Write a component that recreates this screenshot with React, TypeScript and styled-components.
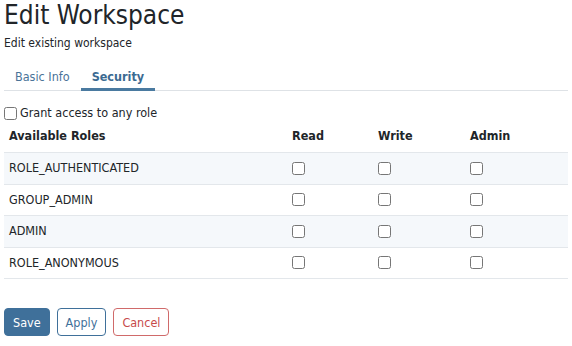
import React, { useState } from 'react';
import styled, { createGlobalStyle } from 'styled-components';

const GlobalStyle = createGlobalStyle`
  body {
    margin: 0;
    background: #ffffff;
    font-family: "DejaVu Sans Condensed", "DejaVu Sans", sans-serif;
    color: #212529;
  }
`;

const Page = styled.div`
  width: 572px;
  padding: 0 4px;
  box-sizing: border-box;
`;

const Title = styled.h1`
  margin: 0;
  font-size: 26px;
  font-weight: 400;
  line-height: 30px;
`;

const Subtitle = styled.p`
  margin: 5px 0 0;
  font-size: 12px;
  line-height: 16px;
`;

const TabBar = styled.div`
  display: flex;
  margin-top: 15px;
  border-bottom: 1px solid #dee2e6;
`;

const Tab = styled.button<{ $active?: boolean }>`
  border: 0;
  background: none;
  font-family: inherit;
  font-size: 12.5px;
  font-weight: ${(p) => (p.$active ? 700 : 400)};
  color: ${(p) => (p.$active ? '#3b6a91' : '#4a7398')};
  padding: 3px 11px 3px;
  line-height: 16px;
  margin-bottom: -1px;
  border-bottom: 3px solid ${(p) => (p.$active ? '#4a7aa0' : 'transparent')};
  cursor: pointer;
`;

const GrantRow = styled.label`
  display: flex;
  align-items: center;
  gap: 3px;
  margin-top: 14px;
  font-size: 12.5px;
  line-height: 16px;
`;

const Check = styled.input`
  width: 13px;
  height: 13px;
  margin: 0;
  display: block;
`;

const Table = styled.table`
  width: 100%;
  table-layout: fixed;
  border-collapse: collapse;
  font-size: 12.5px;
`;

const Col = styled.col<{ $w?: number }>`
  width: ${(p) => (p.$w ? `${p.$w}px` : 'auto')};
`;

const Th = styled.th`
  text-align: left;
  font-weight: 700;
  padding: 7px 5px 8px;
  line-height: 16px;
`;

const Row = styled.tr<{ $striped?: boolean }>`
  background: ${(p) => (p.$striped ? '#f5f8fb' : '#ffffff')};
  border-top: 1px solid #e3e7eb;
  &:last-child {
    border-bottom: 1px solid #e3e7eb;
  }
`;

const Td = styled.td`
  padding: 7px 5px 7.5px;
  height: 16px;
  line-height: 16px;
  vertical-align: middle;
`;

const Actions = styled.div`
  display: flex;
  gap: 7px;
  margin-top: 29px;
`;

const Button = styled.button<{ $variant: 'primary' | 'outline' | 'danger' }>`
  font-family: inherit;
  font-size: 12.5px;
  height: 28px;
  padding: 0 8px;
  border-radius: 4px;
  cursor: pointer;
  border: 1px solid
    ${(p) => (p.$variant === 'danger' ? '#d06a6a' : '#3f709a')};
  background: ${(p) => (p.$variant === 'primary' ? '#3f709a' : '#ffffff')};
  color: ${(p) =>
    p.$variant === 'primary' ? '#ffffff' : p.$variant === 'danger' ? '#c74a4a' : '#3f709a'};
`;

const roles = ['ROLE_AUTHENTICATED', 'GROUP_ADMIN', 'ADMIN', 'ROLE_ANONYMOUS'];

export default function App() {
  const [tab, setTab] = useState('security');

  return (
    <Page>
      <GlobalStyle />
      <Title>Edit Workspace</Title>
      <Subtitle>Edit existing workspace</Subtitle>
      <TabBar>
        <Tab $active={tab === 'basic'} onClick={() => setTab('basic')}>
          Basic Info
        </Tab>
        <Tab $active={tab === 'security'} onClick={() => setTab('security')}>
          Security
        </Tab>
      </TabBar>
      <GrantRow>
        <Check type="checkbox" />
        Grant access to any role
      </GrantRow>
      <Table>
        <colgroup>
          <Col $w={283} />
          <Col $w={86} />
          <Col $w={92} />
          <Col />
        </colgroup>
        <thead>
          <tr>
            <Th>Available Roles</Th>
            <Th>Read</Th>
            <Th>Write</Th>
            <Th>Admin</Th>
          </tr>
        </thead>
        <tbody>
          {roles.map((r, i) => (
            <Row key={r} $striped={i % 2 === 0}>
              <Td>{r}</Td>
              <Td>
                <Check type="checkbox" />
              </Td>
              <Td>
                <Check type="checkbox" />
              </Td>
              <Td>
                <Check type="checkbox" />
              </Td>
            </Row>
          ))}
        </tbody>
      </Table>
      <Actions>
        <Button $variant="primary">Save</Button>
        <Button $variant="outline">Apply</Button>
        <Button $variant="danger">Cancel</Button>
      </Actions>
    </Page>
  );
}
